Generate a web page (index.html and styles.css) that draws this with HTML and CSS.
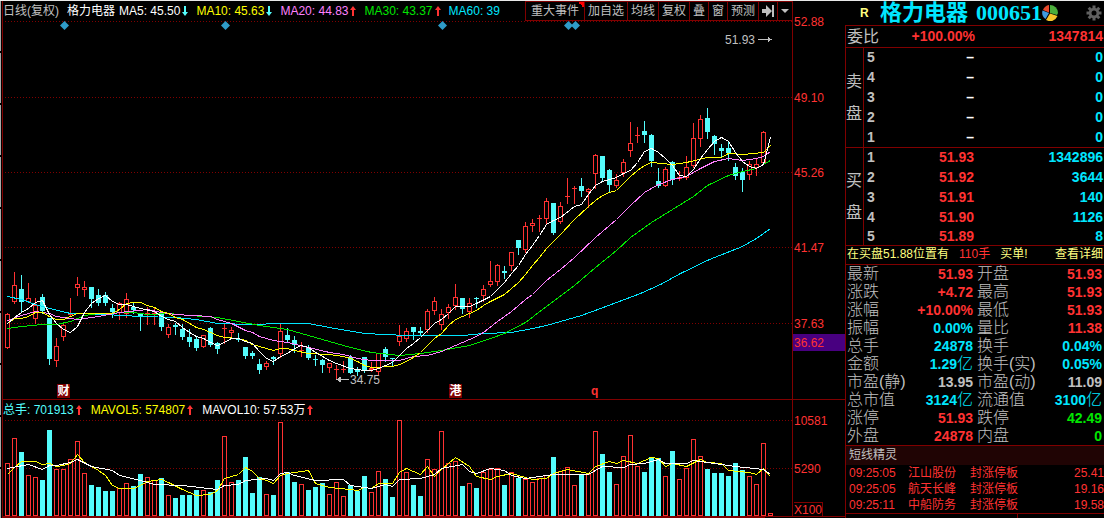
FILE: index.html
```html
<!DOCTYPE html>
<html lang="zh-CN">
<head>
<meta charset="utf-8">
<title>格力电器 000651</title>
<link rel="stylesheet" href="styles.css">
</head>
<body>
<div class="terminal">
  <div class="rail"></div>
  <main class="charts">
    <header class="bar">
      <div class="legend">
        <span class="muted">日线(复权)</span>
        <span class="white stock">格力电器</span>
        <span class="ma white">MA5: 45.50<svg class="arrow down" viewBox="0 0 6 12"><path d="M2 1h2v6h2l-3 4-3-4h2z"/></svg></span>
        <span class="ma yellow">MA10: 45.63<svg class="arrow down" viewBox="0 0 6 12"><path d="M2 1h2v6h2l-3 4-3-4h2z"/></svg></span>
        <span class="ma magenta">MA20: 44.83<svg class="arrow up" viewBox="0 0 6 12"><path d="M2 11h2V5h2L3 1 0 5h2z"/></svg></span>
        <span class="ma green">MA30: 43.37<svg class="arrow up" viewBox="0 0 6 12"><path d="M2 11h2V5h2L3 1 0 5h2z"/></svg></span>
        <span class="ma cyan">MA60: 39</span>
      </div>
      <nav class="tools">
        <button class="tool tool-event" type="button">重大事件</button>
        <button class="tool" type="button">加自选</button>
        <button class="tool" type="button">均线</button>
        <button class="tool" type="button">复权</button>
        <button class="tool" type="button">叠</button>
        <button class="tool" type="button">窗</button>
        <button class="tool" type="button">预测</button>
        <button class="tool" type="button" aria-label="最新"><svg width="12" height="12" viewBox="0 0 12 12"><path d="M0 4h4V0l6 6-6 6V8H0zM10 0h2v12h-2z"/></svg></button>
        <button class="tool" type="button" aria-label="更多"><svg width="8" height="12" viewBox="0 0 8 12"><path d="M0 4h8L4 8z"/></svg></button>
      </nav>
    </header>
    <svg class="plot" id="price" viewBox="3 21 842 379"></svg>
    <div class="legend legend-volume">
      <span class="ma aqua">总手: 701913<svg class="arrow up" viewBox="0 0 6 12"><path d="M2 11h2V5h2L3 1 0 5h2z"/></svg></span>
      <span class="ma yellow">MAVOL5: 574807<svg class="arrow up" viewBox="0 0 6 12"><path d="M2 11h2V5h2L3 1 0 5h2z"/></svg></span>
      <span class="ma white">MAVOL10: 57.53万<svg class="arrow up" viewBox="0 0 6 12"><path d="M2 11h2V5h2L3 1 0 5h2z"/></svg></span>
    </div>
    <svg class="plot" id="volume" viewBox="3 420 842 98"></svg>
  </main>

  <aside class="quote">
    <header class="title">
      <span class="flag">R</span>
      <h1 class="name"><span>格力电器</span><span>000651</span></h1>
      <svg class="pie" width="16" height="16" viewBox="0 0 16 16">
        <path fill="#e8492c" d="M7 7.500 1 5a8 8 0 0 1 6-5z"/>
        <path fill="#4cae3c" d="M8 8V0a8 8 0 0 1 8 8l-1 2z"/>
        <path fill="#f7c52c" d="m8 8.500 7.500 2.500A8 8 0 0 1 4 15z"/>
        <path fill="#3f9be0" d="M7 8 .5 5.500A8 8 0 0 0 3.500 14z"/>
      </svg>
      <svg class="gear" width="16" height="16" viewBox="-8 -8 16 16">
        <g fill="#606060">
          <path d="M-1.500-7.500h3v15h-3z"/>
          <path d="M-1.500-7.500h3v15h-3z" transform="rotate(45)"/>
          <path d="M-1.500-7.500h3v15h-3z" transform="rotate(90)"/>
          <path d="M-1.500-7.500h3v15h-3z" transform="rotate(135)"/>
          <circle r="5.200"/>
        </g>
        <circle r="2.500" fill="#000"/>
      </svg>
    </header>
    <div class="panel">
      <div class="ratio"><span class="label">委比</span><b class="red">+100.00%</b><b class="red">1347814</b></div>
      <section class="depth">
        <div class="side"><span>卖</span><span>盘</span></div>
        <table class="levels">
          <tr><th>5</th><td class="white">–</td><td>0</td></tr>
          <tr><th>4</th><td class="white">–</td><td>0</td></tr>
          <tr><th>3</th><td class="white">–</td><td>0</td></tr>
          <tr><th>2</th><td class="white">–</td><td>0</td></tr>
          <tr><th>1</th><td class="white">–</td><td>0</td></tr>
        </table>
      </section>
      <section class="depth depth-buy">
        <div class="side"><span>买</span><span>盘</span></div>
        <table class="levels">
          <tr><th>1</th><td>51.93</td><td>1342896</td></tr>
          <tr><th>2</th><td>51.92</td><td>3644</td></tr>
          <tr><th>3</th><td>51.91</td><td>140</td></tr>
          <tr><th>4</th><td>51.90</td><td>1126</td></tr>
          <tr><th>5</th><td>51.89</td><td>8</td></tr>
        </table>
      </section>
      <div class="notice"><span>在买盘51.88位置有</span><span class="red">110手</span><span>买单!</span><a class="detail" href="#detail">查看详细</a></div>
      <table class="stats">
        <tr><th>最新</th><td class="red">51.93</td><th>开盘</th><td class="red">51.93</td></tr>
        <tr><th>涨跌</th><td class="red">+4.72</td><th>最高</th><td class="red">51.93</td></tr>
        <tr><th>涨幅</th><td class="red">+10.00%</td><th>最低</th><td class="red">51.93</td></tr>
        <tr><th>振幅</th><td class="cyan">0.00%</td><th>量比</th><td class="red">11.38</td></tr>
        <tr><th>总手</th><td class="cyan">24878</td><th>换手</th><td class="cyan">0.04%</td></tr>
        <tr><th>金额</th><td class="cyan">1.29<span class="unit">亿</span></td><th>换手(实)</th><td class="cyan">0.05%</td></tr>
        <tr><th>市盈(静)</th><td>13.95</td><th>市盈(动)</th><td>11.09</td></tr>
        <tr><th>总市值</th><td class="cyan">3124<span class="unit">亿</span></td><th>流通值</th><td class="cyan">3100<span class="unit">亿</span></td></tr>
        <tr><th>涨停</th><td class="red">51.93</td><th>跌停</th><td class="green">42.49</td></tr>
        <tr><th>外盘</th><td class="red">24878</td><th>内盘</th><td class="green">0</td></tr>
      </table>
      <h2 class="feed-title">短线精灵</h2>
      <table class="feed">
        <tr><td>09:25:05</td><td>江山股份</td><td>封涨停板</td><td>25.41</td></tr>
        <tr><td>09:25:05</td><td>航天长峰</td><td>封涨停板</td><td>19.16</td></tr>
        <tr><td>09:25:11</td><td>中船防务</td><td>封涨停板</td><td>19.58</td></tr>
      </table>
      <div class="tabs"><i></i><i></i></div>
    </div>
  </aside>
</div>
<script src="chart.js"></script>
</body>
</html>
```
FILE: styles.css
```css
* { box-sizing: border-box; }

body {
  margin: 0;
  background: #000;
  color: #c0c0c0;
  font: 12px/16px "Liberation Sans", "Noto Sans CJK SC", sans-serif;
}

.terminal { display: flex; min-height: 100vh; border-top: 1px solid #e8e8e8; }
.rail {
  width: 3px;
  border-right: 1px solid #800000;
  background: repeating-linear-gradient(#a8a8a8 0 50px, #000 50px 52px) 0 0 / 1px 100% no-repeat;
}
.charts { flex: 1; min-width: 0; }

.bar { display: flex; height: 20px; }
.legend { display: flex; flex: 1; gap: 8px; min-width: 0; overflow: hidden; white-space: nowrap; line-height: 20px; }
.bar .legend { margin-right: 24px; }
.stock { margin-right: -4px; }
.legend-volume { gap: 9px; }
.ma { display: flex; align-items: center; gap: 2px; }
.arrow { width: 6px; height: 12px; flex: none; }
.down { fill: #54fcfc; }
.up { fill: #ff3232; }

.white { color: #fff; }
.muted { color: #c0c0c0; }
.yellow { color: #ffff00; }
.magenta { color: #ff80ff; }
.green { color: #00e600; }
.cyan { color: #00e6ff; }
.aqua { color: #54fcfc; }
.red { color: #ff3232; }

.tools { display: flex; margin-right: 52px; border: 1px solid #800000; }
.tool {
  display: flex;
  align-items: center;
  padding: 0 3px;
  border: 0;
  border-left: 1px solid #800000;
  background: #000;
  color: #c0c0c0;
  font: inherit;
}
.tool svg { fill: #c0c0c0; }
.tool-event {
  padding: 0 5px;
  border-left: 0;
  background: linear-gradient(to top right, transparent 50%, #ff0000 50%) top right / 6px 6px no-repeat;
}

.plot { display: block; width: 100%; height: auto; overflow: visible; shape-rendering: crispEdges; }
.plot text { font-size: 12px; fill: #ff3232; }
.plot .note { fill: #c0c0c0; }
.plot .tag { fill: #fff; font-weight: bold; }
.plot .bold { font-weight: bold; }
.grid { stroke: #800000; stroke-dasharray: 1 2; }
.axis { stroke: #800000; fill: none; }
.rise { stroke: #ff3232; fill: #000; }
.fall { stroke: #54fcfc; fill: #54fcfc; }
.line { fill: none; }
.gem { fill: #2f9bc8; shape-rendering: auto; }
.l-white { stroke: #fff; }
.l-yellow { stroke: #ffff00; }
.l-magenta { stroke: #ff80ff; }
.l-green { stroke: #00e600; }
.l-cyan { stroke: #00e6ff; }

.quote { display: flex; flex-direction: column; width: 259px; }
.title { display: flex; align-items: center; height: 24px; padding: 0 2px 0 15px; }
.flag { width: 20px; color: #ffff80; font-weight: bold; }
.name { display: flex; gap: 8px; margin: 0; color: #00e6ff; font: bold 22px/24px "Liberation Serif", "Noto Sans CJK SC", serif; white-space: nowrap; }
.gear { margin-left: auto; }
.panel { flex: 1; display: flex; flex-direction: column; border: solid #800000; border-width: 1px 0 0 1px; }

.ratio {
  display: grid;
  grid-template-columns: 40px 88px 1fr;
  height: 22px;
  padding: 0 1px;
  border-bottom: 1px solid #800000;
  font-size: 14px;
  line-height: 21px;
  text-align: right;
}
.label { font-size: 16px; text-align: left; }

.depth { display: flex; border-bottom: 1px solid #800000; }
.side {
  display: flex;
  flex-direction: column;
  justify-content: center;
  width: 18px;
  border-right: 1px solid #800000;
  font-size: 16px;
  line-height: 32px;
}
table { border-collapse: collapse; }
th, td { padding: 0; }
.levels { flex: 1; margin-right: 1px; font-size: 14px; line-height: 20px; font-weight: bold; }
.levels th { padding-left: 3px; text-align: left; }
.levels td { text-align: right; color: #00e6ff; }
.levels td:nth-child(2) { width: 60px; color: #ff3232; }
.levels td.white { color: #fff; }
.levels td:last-child { width: 129px; }
.levels tr:first-child { line-height: 19px; }
.depth-buy tr:last-child { line-height: 18px; }

.notice { display: flex; height: 19px; padding: 0 1px; border-bottom: 1px solid #800000; color: #ffff80; line-height: 16px; white-space: nowrap; }
.notice span + span { margin-left: 10px; }
.detail { margin-left: auto; color: inherit; text-decoration: none; }

.stats { width: 100%; font-size: 14px; line-height: 18px; table-layout: fixed; }
.stats th { padding-left: 1px; font-size: 16px; font-weight: 300; text-align: left; white-space: nowrap; }
.stats td { padding-right: 2px; font-weight: bold; text-align: right; white-space: nowrap; }
.stats td + th { padding-left: 2px; }
.unit { font-size: 16px; font-weight: 300; }

.feed-title { margin: 0; padding: 0 3px; border-top: 1px solid #800000; background: #200404; font-size: 12px; font-weight: 400; line-height: 19px; }
.feed { color: #ff3232; line-height: 16px; border-bottom: 1px solid #800000; }
.feed td:first-child { width: 62px; padding-left: 3px; }
.feed td:nth-child(2) { width: 62px; }
.feed td:last-child { text-align: right; }
.tabs { display: flex; flex: 1; }
.tabs i { flex: 1; }
.tabs i:first-child { flex: 2; border-right: 1px solid #800000; }
```
FILE: chart.js
```javascript
// Each candle: direction, body top, body bottom, high, low.
const candles = `u314,348,313,348 u285,302,272,303 d289,302,275,311 u298,302,283,302 u305,319,298,323
d297,311,294,313 d318,359,318,364 u346,361,338,366 u325,337,324,340 u313,315,298,315
u284,288,277,295 u287,290,281,296 d287,299,287,307 d295,303,289,305 d295,303,292,305
d308,312,304,317 u303,313,302,319 u299,314,293,317 d307,310,302,313 d313,316,313,330
u313,315,307,324 u313,314,307,324 d314,327,314,330 u327,335,324,337 d325,327,323,334
d329,337,324,339 d337,342,329,346 d339,348,336,350 u335,347,335,347 d328,345,327,346
d343,349,342,353 u328,329,323,343 u330,333,327,336 d339,340,333,341 d347,356,347,358
d353,356,351,358 d364,370,359,373 u363,367,361,369 d357,359,356,364 u331,354,324,357
d335,340,328,342 d340,345,336,352 u350,351,342,356 d347,358,345,359 d359,360,355,365
d360,365,359,372 u363,368,363,372 u369,370,365,379 u369,370,361,372 d357,373,355,373
d370,372,367,375 d357,370,357,372 u368,370,362,371 u353,372,353,375 d349,357,347,361
d358,359,358,365 u336,342,325,345 u331,339,328,341 d327,332,327,339 d331,333,327,335
u311,330,309,332 u301,311,297,314 u314,325,309,329 u307,313,304,318 u297,306,284,309
d298,309,298,313 u303,312,298,317 d298,299,297,307 u289,296,285,301 u281,285,261,286
u265,282,264,285 d271,273,266,278 u252,266,252,270 d240,248,240,254 u226,250,222,252
u223,226,219,231 u218,219,215,231 u201,219,198,223 d203,233,203,234 u206,222,202,223
u196,197,178,203 u188,189,186,203 d186,191,178,196 u189,192,188,207 u155,174,154,188
d156,178,156,180 d170,185,169,192 u180,186,174,187 u162,173,159,176 u143,151,122,156
u135,136,127,142 d131,135,121,142 d135,161,134,166 d181,186,168,187 u169,186,167,186
d162,180,161,184 u177,179,171,180 u167,178,156,179 u138,166,123,167 u119,139,115,146
d118,132,108,138 d136,144,135,154 d148,151,144,156 d148,153,142,160 d167,176,163,179
d172,180,168,191 u164,175,161,179 u164,168,158,175 u132,163,131,163`.split(/\s+/);

const volumes = `u463 u438 d452 u475 u477 d480 d430 u469 u469 u459 u441 u473 d485 d487 d491 d491 u488 u483
d486 d474 u477 u480 d478 u495 d498 d495 d495 d490 u490 d492 d480 u436 u482 d480 d457 d493 d477 u494
d495 u422 d472 d482 u484 d490 d487 d483 u494 u482 u496 d485 d491 d476 u492 u471 d479 d497 u420 u472
d485 d496 u459 u469 u431 u463 u461 d486 u483 d488 u472 u469 u468 d485 u472 d478 u479 u482 u478 u475
d457 u471 u467 u485 d475 u474 u431 d454 d472 u484 u456 u435 u466 d472 d457 d458 u476 d451 u479 u468
u439 u456 d469 d473 d473 d476 d463 d470 u476 u484 u443 u513`.split(/\s+/);

const averages = {
  cyan: '7,296 21,299 35,304 49,308 70,313 105,314 140,316 175,317 196,319 217,323 252,324 280,323 308,323 329,327 364,333 406,335 462,335 483,333 511,332 532,328 546,325 581,315 600,308 640,293 660,284 680,273 709,259 742,246 756,238 770,228',
  green: '7,328 21,326 42,324 56,324 70,321 84,315 98,313 133,312 147,314 168,313 189,315 203,316 217,317 238,321 259,325 273,327 287,329 308,335 322,339 350,347 371,352 399,355 420,353 441,350 469,345 490,338 504,333 525,322 546,306 574,285 595,267 616,250 630,237 651,222 672,209 693,196 707,185 728,175 742,171 756,168 770,160',
  magenta: '7,320 21,315 35,311 49,313 56,316 77,319 98,316 119,312 147,309 161,312 175,314 210,316 217,319 231,323 245,330 252,332 259,336 273,340 287,342 308,347 329,352 343,354 357,358 371,360 399,360 413,356 427,355 441,351 462,342 476,336 483,332 497,321 511,311 525,299 532,294 546,280 560,269 574,257 595,237 616,219 630,205 644,192 658,184 672,179 686,176 700,168 714,161 728,158 742,160 756,158 763,156 770,151',
  yellow: '7,323 14,318 21,318 28,316 35,312 42,312 49,316 56,319 63,319 70,316 77,313 112,313 119,309 126,303 133,302 140,302 147,305 154,307 161,311 168,313 175,317 182,319 189,323 196,327 203,329 210,332 217,335 224,337 238,338 245,340 252,344 266,348 273,350 280,348 287,348 294,350 308,353 329,354 343,356 350,358 357,361 364,365 371,367 392,366 399,364 406,361 413,357 420,352 427,345 434,338 441,333 448,325 455,319 469,313 476,310 483,305 490,301 504,294 511,288 518,282 525,274 532,265 539,257 546,248 560,234 574,219 588,206 595,200 602,195 609,192 616,190 623,183 630,176 637,170 644,165 651,162 672,164 686,162 707,157 721,157 728,153 742,154 763,152 770,145',
  white: '7,323 14,317 21,312 28,308 35,302 42,300 49,314 56,323 63,329 70,332 77,326 84,312 91,303 98,298 105,295 112,301 119,304 126,304 133,306 140,308 154,311 161,316 168,319 175,321 182,327 189,332 196,336 203,338 210,342 217,345 224,342 231,338 238,338 245,341 252,343 259,351 266,358 273,361 280,356 287,353 294,348 301,345 308,347 315,352 322,356 329,360 336,363 350,368 364,370 371,370 378,368 385,365 392,362 399,355 406,348 413,343 420,337 427,330 434,323 441,319 448,313 455,306 469,306 476,303 490,296 497,289 504,282 511,273 518,265 525,254 532,245 539,235 546,224 553,220 560,217 574,206 581,204 588,194 595,185 602,181 609,179 616,177 623,173 630,170 637,162 644,151 651,148 658,152 665,158 672,165 679,175 686,176 693,169 700,158 707,149 714,141 721,137 728,141 735,152 742,161 749,166 756,168 763,164 770,137'
};

const volumeAverages = {
  yellow: '7,474 14,467 21,461 35,461 42,464 49,463 56,466 63,465 70,463 77,454 84,462 98,470 105,475 112,485 119,488 133,488 140,485 147,481 161,479 168,482 182,489 196,495 210,494 217,490 224,478 238,474 245,467 252,471 259,478 266,480 273,483 280,475 287,473 308,470 315,483 329,487 350,489 357,490 364,487 371,488 378,483 392,483 399,472 406,468 420,474 427,466 434,476 441,469 455,457 469,466 476,476 490,479 497,476 511,473 532,479 546,478 553,473 567,469 588,473 595,466 609,461 616,463 623,460 637,463 651,457 658,458 665,466 672,463 686,466 700,459 707,462 721,463 728,470 749,472 756,474 763,468 770,476',
  white: '7,468 28,464 42,469 49,465 56,465 70,462 77,459 91,466 112,470 119,475 140,480 154,484 182,485 217,489 224,485 238,484 245,480 266,478 273,480 280,473 287,472 294,475 315,480 343,479 350,485 371,488 385,484 392,486 399,479 420,478 434,474 441,468 462,464 469,471 476,473 490,468 504,470 511,475 525,478 553,474 588,474 602,466 623,467 630,464 644,463 658,459 665,463 686,463 693,460 714,463 735,466 763,469 770,474'
};

const kind = item => (item[0] === 'u' ? 'rise' : 'fall');
const grid = y => `<path class="grid" d="M5 ${y + 0.5}H792"/>`;
const label = (y, text) => `<text x="794" y="${y + 5}">${text}</text>`;
const lines = set => Object.entries(set)
  .map(([name, points]) => `<polyline class="line l-${name}" transform="translate(.5 .5)" points="${points}"/>`).join('');

const candleMarkup = candles.map((item, i) => {
  const [top, bottom, high, low] = item.slice(1).split(',').map(Number);
  const x = 7 + 7 * i;
  const height = Math.max(bottom - top - 1, 0);
  return `<g class="${kind(item)}"><path d="M${x + 0.5} ${high}V${low + 1}"/>` +
    `<path d="M${x - 2} ${top + 0.5}h4.500v${height}h-4v-${height}"/></g>`;
}).join('');

const volumeMarkup = volumes.map((item, i) =>
  `<rect class="${kind(item)}" x="${5.5 + 7 * i}" y="${+item.slice(1) + 0.5}" width="4" height="${515 - item.slice(1)}"/>`
).join('');

const gems = [64, 225, 442, 568, 575]
  .map(x => `<path class="gem" d="M${x + 0.5} 21l4.500 4.500-4.500 4.500-4.500-4.500z"/>`).join('');

const tags = [[57, '财'], [449, '港']]
  .map(([x, text]) => `<rect x="${x}" y="384" width="13" height="14" fill="#800000"/><text class="tag" x="${x + 0.5}" y="395">${text}</text>`).join('');

const prices = [[21, '52.88'], [97, '49.10'], [172, '45.26'], [247, '41.47'], [323, '37.63']];

document.getElementById('price').innerHTML =
  prices.map(([y, text]) => grid(y) + label(y, text)).join('') +
  '<path class="axis" d="M792.5 1V400M3 399.5H845"/>' +
  '<rect x="793" y="334" width="52" height="17" fill="#480080"/>' + label(342, '36.62') +
  candleMarkup + lines(averages) + gems + tags +
  '<text class="bold" x="591" y="395">q</text>' +
  '<text class="note" x="725" y="44">51.93</text><path stroke="#c0c0c0" fill="#c0c0c0" d="M758 39.500h12M768 37.500v4l3-2z"/>' +
  '<text class="note" x="350" y="384">34.75</text><path stroke="#c0c0c0" fill="#c0c0c0" d="M338 379.500h11M340 377.500v4l-3-2z"/>';

document.getElementById('volume').innerHTML =
  grid(420) + label(420, '10581') + grid(468) + label(468, '5290') +
  '<path class="axis" d="M792.5 400V516M3 516.500H845M3 517.500H765M793.500 502.500H822.500V516"/>' +
  '<text x="794" y="514">X100</text>' + volumeMarkup + lines(volumeAverages);
```
